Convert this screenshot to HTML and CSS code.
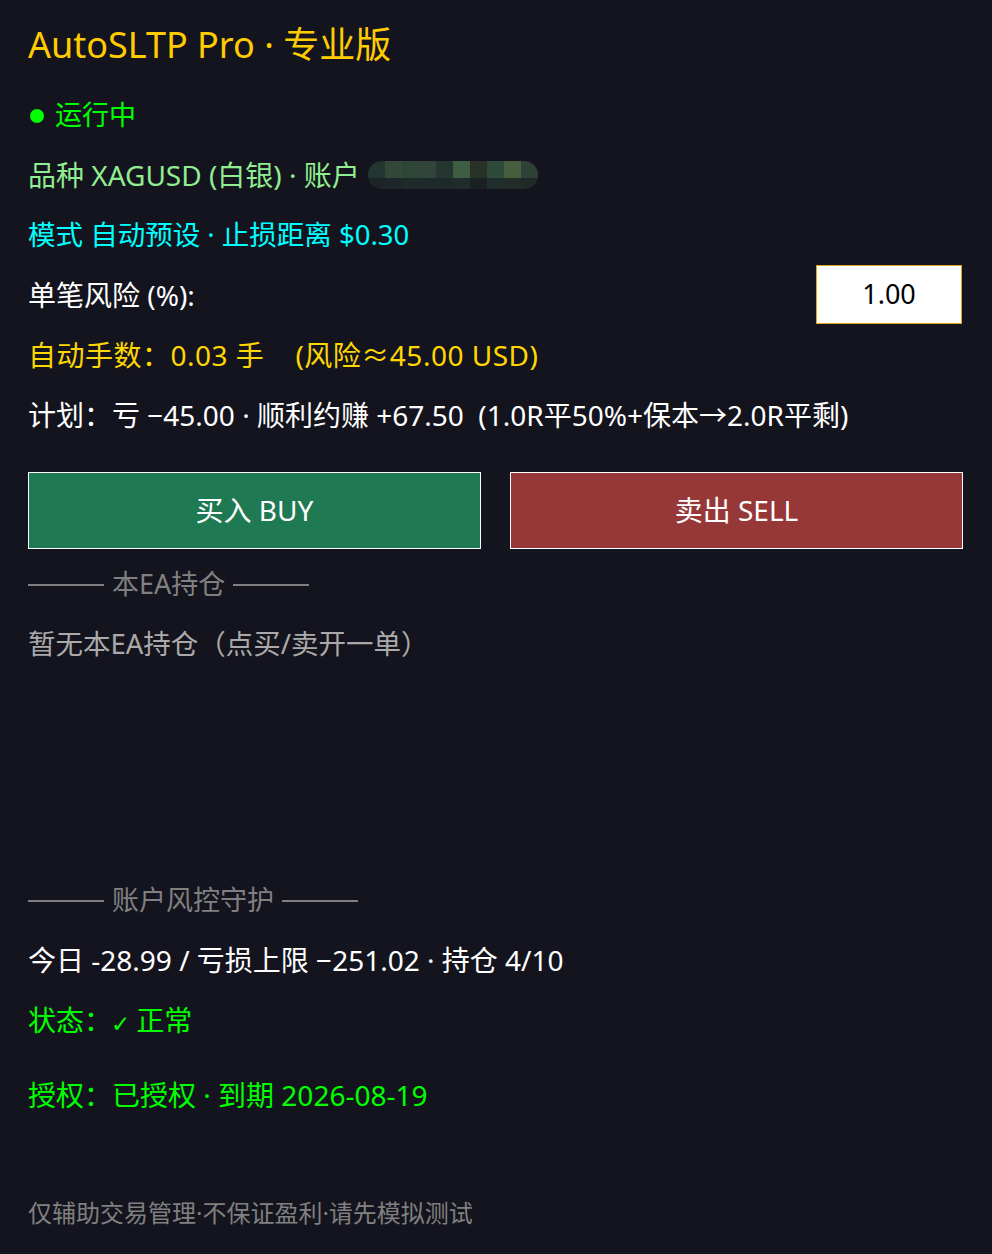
FILE: index.html
```html
<!DOCTYPE html>
<html lang="zh-CN">
  <head>
    <meta charset="UTF-8" />
    <meta name="viewport" content="width=device-width, initial-scale=1.0" />
    <title>AutoSLTP Pro</title>
    <link rel="stylesheet" href="styles.css">
  </head>
  <body>
    <main class="panel">
      <h1 class="title">AutoSLTP Pro · 专业版</h1>

      <div class="row running"><span class="dot"></span>运行中</div>
      <div class="row symbol">
        品种 XAGUSD (白银) · 账户
        <span class="masked">
          <i style="--t:#233530;--b:#1c2427"></i>
          <i style="--t:#34483a;--b:#1d2628"></i>
          <i style="--t:#2e4638;--b:#1f2a2a"></i>
          <i style="--t:#30443a;--b:#1e2929"></i>
          <i style="--t:#253530;--b:#1e2929"></i>
          <i style="--t:#3d5e42;--b:#202b2c"></i>
          <i style="--t:#2a3128;--b:#1a2024"></i>
          <i style="--t:#2e4a3a;--b:#1f2d2c"></i>
          <i style="--t:#455f3d;--b:#222c28"></i>
          <i style="--t:#2f4036;--b:#1f2928"></i>
        </span>
      </div>
      <div class="row mode">模式 自动预设 · 止损距离 $0.30</div>

      <div class="row risk">
        <label for="risk">单笔风险 (%):</label>
        <input id="risk" class="risk-input" type="text" value="1.00">
      </div>

      <div class="row lots">自动手数：0.03 手 &nbsp;&nbsp;&nbsp;(风险≈45.00 USD)</div>
      <div class="row plan">计划：亏 −45.00 · 顺利约赚 +67.50 &nbsp;(1.0R平50%+保本→2.0R平剩)</div>

      <div class="actions">
        <button class="btn buy">买入 BUY</button>
        <button class="btn sell">卖出 SELL</button>
      </div>

      <div class="row section"><span class="rule"></span>本EA持仓<span class="rule"></span></div>
      <div class="row empty">暂无本EA持仓（点买/卖开一单）</div>

      <div class="row section guard"><span class="rule"></span>账户风控守护<span class="rule"></span></div>
      <div class="row today">今日 -28.99 / 亏损上限 −251.02 · 持仓 4/10</div>
      <div class="row ok">状态：<span class="check">✓</span>正常</div>
      <div class="row ok license">授权：已授权 · 到期 2026-08-19</div>

      <footer class="note">仅辅助交易管理·不保证盈利·请先模拟测试</footer>
    </main>
  </body>
</html>
```

FILE: styles.css
```css
      * {
        box-sizing: border-box;
      }

      body {
        margin: 0;
        background: #14141e;
        color: #fff;
        font-family: "Noto Sans", "Noto Sans CJK SC", sans-serif;
        min-height: 1254px;
      }

      .panel {
        padding: 20px 30px 0 28px;
      }

      .title {
        margin: 0 0 15px;
        font-size: 36px;
        font-weight: normal;
        line-height: 50px;
        color: #ffcc00;
      }

      .row {
        font-size: 28px;
        line-height: 60px;
        height: 60px;
        display: flex;
        align-items: center;
        white-space: pre;
      }

      .running {
        color: #00ff00;
        font-size: 27px;
      }

      .dot {
        width: 14px;
        height: 14px;
        border-radius: 50%;
        background: #00ff00;
        margin: 2px 11px 0 2px;
      }

      .symbol {
        color: #90ee90;
        white-space: nowrap;
      }

      .masked {
        display: flex;
        height: 28px;
        margin-left: 8px;
        border-radius: 14px;
        overflow: hidden;
      }

      .masked i {
        width: 17px;
        background: linear-gradient(var(--t) 0 62%, var(--b) 62% 100%);
      }

      .mode {
        color: #00ffff;
        font-size: 27.5px;
      }

      .risk {
        justify-content: space-between;
      }

      .risk-input {
        width: 146px;
        height: 59px;
        margin-top: -2px;
        border: 1px solid #daa520;
        background: #fff;
        color: #000;
        font: inherit;
        font-size: 27px;
        text-align: center;
        outline: none;
      }

      .lots {
        color: #ffd700;
        letter-spacing: 0.5px;
      }

      .actions {
        display: flex;
        gap: 29px;
        margin-top: 27px;
        margin-bottom: 5px;
      }

      .btn {
        flex: 0 0 453px;
        height: 77px;
        padding-bottom: 4px;
        border: 1px solid #fff;
        color: #fff;
        font: inherit;
        font-size: 28px;
        cursor: pointer;
      }

      .buy {
        background: #1f7a53;
      }

      .sell {
        background: #963838;
      }

      .section {
        color: #808080;
        font-size: 27px;
      }

      .rule {
        width: 76px;
        height: 2px;
        background: #808080;
        margin: 2px 8px 0 0;
      }

      .rule:last-child {
        margin: 2px 0 0 8px;
      }

      .empty {
        color: #aaaaaa;
        font-size: 27.5px;
      }

      .guard {
        margin-top: 196px;
      }

      .ok {
        color: #00ff00;
      }

      .check {
        font-family: "DejaVu Sans", sans-serif;
        font-size: 23px;
        margin: 8px 6px 0 -1px;
      }

      .license {
        margin-top: 15px;
      }

      .note {
        margin-top: 58px;
        font-size: 24px;
        line-height: 60px;
        color: #808080;
      }
```
